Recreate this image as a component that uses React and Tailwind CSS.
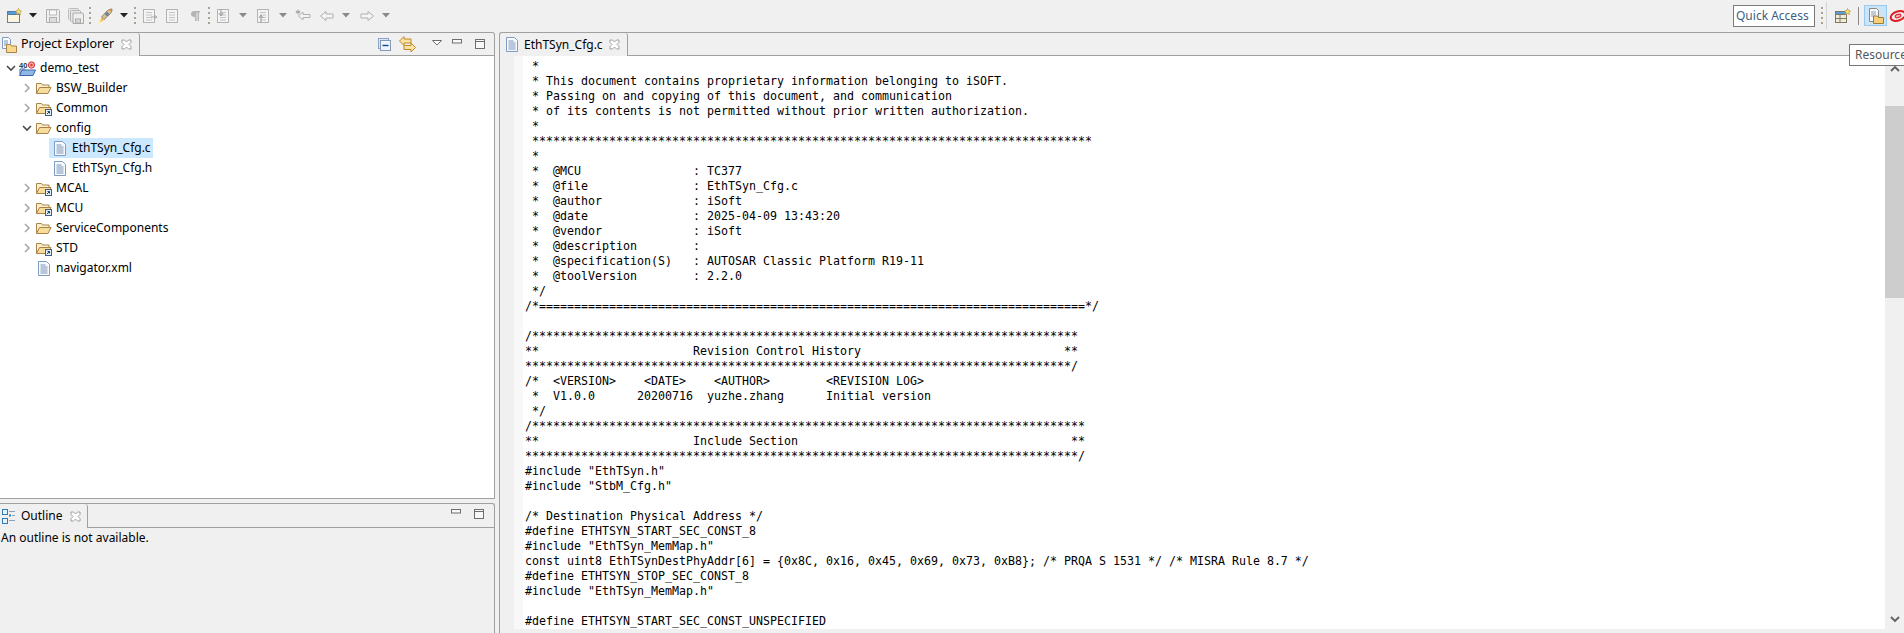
import React from "react";

const stars = (n) => "*".repeat(n);

const codeLines = [
  " *",
  " * This document contains proprietary information belonging to iSOFT.",
  " * Passing on and copying of this document, and communication",
  " * of its contents is not permitted without prior written authorization.",
  " *",
  " " + stars(80),
  " *",
  " *  @MCU                : TC377",
  " *  @file               : EthTSyn_Cfg.c",
  " *  @author             : iSoft",
  " *  @date               : 2025-04-09 13:43:20",
  " *  @vendor             : iSoft",
  " *  @description        :",
  " *  @specification(S)   : AUTOSAR Classic Platform R19-11",
  " *  @toolVersion        : 2.2.0",
  " */",
  "/*" + "=".repeat(78) + "*/",
  "",
  "/" + stars(78),
  "**                      Revision Control History                             **",
  stars(78) + "/",
  "/*  <VERSION>    <DATE>    <AUTHOR>        <REVISION LOG>",
  " *  V1.0.0      20200716  yuzhe.zhang      Initial version",
  " */",
  "/" + stars(79),
  "**                      Include Section                                       **",
  stars(79) + "/",
  '#include "EthTSyn.h"',
  '#include "StbM_Cfg.h"',
  "",
  "/* Destination Physical Address */",
  "#define ETHTSYN_START_SEC_CONST_8",
  '#include "EthTSyn_MemMap.h"',
  "const uint8 EthTSynDestPhyAddr[6] = {0x8C, 0x16, 0x45, 0x69, 0x73, 0xB8}; /* PRQA S 1531 */ /* MISRA Rule 8.7 */",
  "#define ETHTSYN_STOP_SEC_CONST_8",
  '#include "EthTSyn_MemMap.h"',
  "",
  "#define ETHTSYN_START_SEC_CONST_UNSPECIFIED",
];

// --- icons ---
function Svg({ className = "", w = 16, h = 16, children }) {
  return (
    <svg viewBox={`0 0 ${w} ${h}`} width={w} height={h} className={`shrink-0 ${className}`}>
      {children}
    </svg>
  );
}

const DropArrow = ({ className = "", color = "#222" }) => (
  <Svg w={8} h={5} className={className}><path d="M0 0h8L4 4.5z" fill={color} /></Svg>
);

const Grip = ({ className = "" }) => (
  <div className={`flex flex-col gap-[3px] w-[2px] shrink-0 ${className}`}>
    {[0, 1, 2, 3].map((i) => <div key={i} className="w-[2px] h-[2px] bg-[#a8a294]" />)}
  </div>
);

const NewIcon = ({ className }) => (
  <Svg className={className}>
    <rect x="1.5" y="3.5" width="12" height="11" fill="#fbf6dd" stroke="#6f7f8f" />
    <rect x="1.5" y="3.5" width="12" height="3" fill="#5b9bd5" stroke="#4a7fb0" />
    <path d="M12.5 0.5l1 2 2 .5-1.5 1.5.5 2-2-1-2 1 .5-2L9.5 3l2-.5z" fill="#f7e27a" stroke="#b8923a" strokeWidth=".7" />
  </Svg>
);

const SaveIcon = ({ className }) => (
  <Svg className={className}>
    <path d="M1.5 1.5h12l1 1v12h-13z" fill="#eeeeee" stroke="#b0b0b0" />
    <rect x="4.5" y="2" width="7" height="5" fill="#f8f8f8" stroke="#bcbcbc" />
    <rect x="4.5" y="9.5" width="7" height="5" fill="#dcdcdc" stroke="#b0b0b0" />
  </Svg>
);

const SaveAllIcon = ({ className }) => (
  <Svg className={className}>
    <rect x=".5" y=".5" width="10" height="11" rx="1" fill="#e8e8e8" stroke="#bcbcbc" />
    <rect x="2.5" y="2.5" width="10" height="11" rx="1" fill="#e8e8e8" stroke="#b4b4b4" />
    <path d="M5 5h9.5l1 1v9.5H5z" fill="#eeeeee" stroke="#aaaaaa" />
    <rect x="7.5" y="11" width="5" height="4" fill="#d8d8d8" stroke="#aaaaaa" />
  </Svg>
);

const RocketIcon = ({ className }) => (
  <Svg className={className}>
    <path d="M5.5 9.5L0.5 15.5c3 0 5-1 7-3.500z" fill="#fbeeb0" />
    <path d="M5 9.5l-2.500 4c2 0 3.500-.5 4.500-2z" fill="#f5bd52" />
    <path d="M4.500 9L10.500 2.500c1.500-1 3-1.500 4.500-1.500 0 2-.5 3.500-1.500 4.500L7 11.500z" fill="#d3c3a2" stroke="#8a6d3b" strokeWidth=".8" />
    <circle cx="10" cy="6" r="1.500" fill="#6f8fb0" stroke="#46586a" strokeWidth=".5" />
    <path d="M12 1.500L14.500 4 15 1z" fill="#d8862c" />
  </Svg>
);

const GreyDoc = ({ className, children }) => (
  <Svg className={className}>
    <rect x="1.5" y="1.5" width="11" height="13" fill="#f4f4f4" stroke="#b4b4b4" />
    <path d="M4 4.5h6M4 7h6M4 9.5h6M4 12h6" stroke="#c4c4c4" />
    {children}
  </Svg>
);

const Pilcrow = ({ className }) => (
  <Svg className={className}>
    <path d="M7 3h6v1.500h-1V13h-1.500V4.500H9.500V13H8V9C5.500 9 4 7.800 4 6s1.500-3 3-3z" fill="#b4b4b4" />
  </Svg>
);

const ArrowLeft = ({ className }) => (
  <Svg className={className}>
    <path d="M1.5 8L7 3.5V6h7v4H7v2.500z" fill="#f4f4f4" stroke="#b0b0b0" />
  </Svg>
);

const ArrowRight = ({ className }) => (
  <Svg className={className}>
    <path d="M14.5 8L9 3.5V6H2v4h7v2.500z" fill="#f4f4f4" stroke="#b0b0b0" />
  </Svg>
);

const LastEdit = ({ className }) => (
  <Svg className={className}>
    <path d="M3.5 8L8 4v2.500h7v3H8V12z" fill="#f4f4f4" stroke="#b0b0b0" />
    <path d="M3 1.500v5M.8 3l4.400 2M5.200 3L.8 5" stroke="#9a9a9a" strokeWidth=".9" />
  </Svg>
);

const FolderOpen = ({ link = false, className = "" }) => (
  <Svg className={className}>
    <path d="M.5 13.500V3.500h5l1 1.500H13v2" fill="#fbeecb" stroke="#a98449" />
    <path d="M.5 13.500L3.500 7.500H15l-3 6z" fill="#f8dc9c" stroke="#a98449" />
    {link && (
      <g>
        <rect x="9.5" y="9.5" width="6" height="6" fill="#e6eef8" stroke="#3d5f80" />
        <path d="M11 14l2.500-2.500M11.500 11.500h2v2" stroke="#1f4468" fill="none" />
      </g>
    )}
  </Svg>
);

const FileIcon = ({ className = "" }) => (
  <Svg w={12} h={15} className={className}>
    <path d="M.5.5h8l3 3v11H.5z" fill="#f7f9fd" stroke="#7f9cc4" />
    <path d="M2.500 4h5M2.500 6h7M2.500 8h7M2.500 10h7M2.500 12h7" stroke="#7b93b8" />
  </Svg>
);

const ExplorerIcon = ({ className = "" }) => (
  <Svg className={className}>
    <path d="M1.5.5h6l2 2v9h-8z" fill="#f7f9fd" stroke="#7f9cc4" />
    <path d="M3 4h4M3 6h4M3 8h3" stroke="#7b93b8" />
    <path d="M5.500 15.500V7.500h4l1 1.500h5v6.500z" fill="#f8d98e" stroke="#a98449" />
  </Svg>
);

const ProjectIcon = ({ className = "" }) => (
  <Svg w={17} h={15} className={className}>
    <text x="0" y="6.500" fontSize="7.500" fontWeight="700" fontFamily="Liberation Sans, sans-serif" fill="#333">40</text>
    <circle cx="12.5" cy="4" r="3.200" fill="#f3a8a8" stroke="#d93a3a" />
    <circle cx="12.5" cy="4" r="1.200" fill="#d93a3a" />
    <path d="M.5 14.500L3 9h13.500L14 14.500z" fill="#8fb7e6" stroke="#3a67a8" />
    <path d="M1 13V8h5" fill="none" stroke="#3a67a8" />
  </Svg>
);

const CloseX = ({ className = "" }) => (
  <Svg w={11} h={11} className={className}>
    <path d="M1 1h2.500L5.500 3l2-2H10v2.500l-2 2 2 2V10H7.500l-2-2-2 2H1V7.500l2-2-2-2z" fill="#fff" stroke="#8c8c8c" strokeWidth=".8" />
  </Svg>
);

const MinBtn = ({ className = "" }) => (
  <Svg w={10} h={5} className={className}><rect x=".5" y=".5" width="9" height="3.500" fill="#f8f8f8" stroke="#6e6e6e" /></Svg>
);

const MaxBtn = ({ className = "" }) => (
  <Svg w={10} h={10} className={className}>
    <rect x=".5" y=".5" width="9" height="9" fill="#f8f8f8" stroke="#6e6e6e" />
    <path d="M0 2.500h10" stroke="#6e6e6e" />
  </Svg>
);

const ViewMenu = ({ className = "" }) => (
  <Svg w={10} h={6} className={className}><path d="M.5.5h9L5 5z" fill="#fff" stroke="#6e6e6e" /></Svg>
);

const CollapseAll = ({ className = "" }) => (
  <Svg w={13} h={13} className={className}>
    <rect x=".5" y=".5" width="10" height="10" fill="#dbe6f4" stroke="#8ba6c9" />
    <rect x="2.500" y="2.500" width="10" height="10" fill="#eef4fb" stroke="#8498b8" />
    <path d="M4.500 7.500h6" stroke="#14488a" strokeWidth="1.400" />
  </Svg>
);

const LinkEditor = ({ className = "" }) => (
  <Svg w={17} h={17} className={className}>
    <path d="M.5 5L5 .5v2.500h7v4H5v2.500z" fill="#f9e3a8" stroke="#c08a24" />
    <path d="M16.500 11.500L12 7v2.500H5v4h7V16z" fill="#f9e3a8" stroke="#c08a24" />
  </Svg>
);

const OutlineIcon = ({ className = "" }) => (
  <Svg w={14} h={15} className={className}>
    <rect x=".5" y=".5" width="5" height="5" fill="#eaf3fb" stroke="#2c7cc0" />
    <rect x=".5" y="9.5" width="5" height="5" fill="#eaf3fb" stroke="#2c7cc0" />
    <rect x="7" y="5.5" width="2" height="2" fill="#2c7cc0" />
    <path d="M7 2.500h6M10 6.500h3M7 11.500h6" stroke="#8aa2b8" />
  </Svg>
);

const PerspectiveIcon = ({ className = "" }) => (
  <Svg className={className}>
    <rect x=".5" y="3.500" width="11" height="11" fill="#f1ecd8" stroke="#7e7a63" />
    <path d="M.5 6.500h11M5 6.500v8M.5 10.500h11" stroke="#7e7a63" />
    <rect x="1" y="4" width="10" height="2" fill="#5b9bd5" />
    <path d="M12.500 .5l1 2 2 .5-1.500 1.500.5 2-2-1-2 1 .5-2L9.500 3l2-.5z" fill="#f7e27a" stroke="#b8923a" strokeWidth=".7" />
  </Svg>
);

const ResourceIcon = ({ className = "" }) => (
  <Svg className={className}>
    <path d="M1.5.5h7l2 2v11h-9z" fill="#f5f7fa" stroke="#8a8a7a" />
    <path d="M3 4h5M3 6h5M3 8h4" stroke="#8da0b8" />
    <path d="M5.500 15.500V8h4l1 1.500h5v6z" fill="#f8d07a" stroke="#a07d35" />
  </Svg>
);

const DebugIcon = ({ className = "" }) => (
  <Svg w={18} h={14} className={className}>
    <ellipse cx="9" cy="7" rx="7.500" ry="4.500" transform="rotate(-18 9 7)" fill="none" stroke="#e01b24" strokeWidth="2" />
    <ellipse cx="9" cy="7" rx="3" ry="1.600" transform="rotate(-18 9 7)" fill="#f6b0b0" stroke="#e01b24" />
  </Svg>
);

const Chevron = ({ open }) => (
  <Svg w={10} h={10}>
    {open
      ? <path d="M1 3l4 4 4-4" fill="none" stroke="#4a4a4a" strokeWidth="1.600" />
      : <path d="M3 1l4 4-4 4" fill="none" stroke="#a8a8a8" strokeWidth="1.600" />}
  </Svg>
);

// --- tree rows ---
function FolderRow({ name, link = false, open = false }) {
  return (
    <div className="flex items-center h-5 pl-[22px]">
      <Chevron open={open} />
      <FolderOpen link={link} className="ml-[4px]" />
      <span className="ml-[4px]">{name}</span>
    </div>
  );
}

function FileRow({ name, selected = false }) {
  return (
    <div className="flex items-center h-5 pl-[49px]">
      <div className={`flex items-center h-5 pl-[5px] pr-[2px] ${selected ? "bg-[#cce8ff]" : ""}`}>
        <FileIcon />
        <span className="ml-[6px]">{name}</span>
      </div>
    </div>
  );
}

export default function App() {
  return (
    <div className="relative w-[1904px] h-[633px] overflow-hidden bg-[#f0f0f0] text-[12px] text-black font-['Noto_Sans',sans-serif]">
      {/* Toolbar */}
      <div className="flex items-center h-8 pb-[1px]">
        <NewIcon className="ml-[6px]" />
        <DropArrow className="ml-[7px]" />
        <SaveIcon className="ml-[8px]" />
        <SaveAllIcon className="ml-[7px]" />
        <Grip className="ml-[5px]" />
        <RocketIcon className="ml-[6px]" />
        <DropArrow className="ml-[7px]" />
        <Grip className="ml-[6px]" />
        <GreyDoc className="ml-[6px]">
          <path d="M9 9h5M12 7l3 2-3 2" fill="none" stroke="#a8a8a8" />
        </GreyDoc>
        <GreyDoc className="ml-[7px]" />
        <Pilcrow className="ml-[6px]" />
        <Grip className="ml-[5px]" />
        <GreyDoc className="ml-[6px]">
          <path d="M5 1v6M3 5l2 3 2-3" fill="none" stroke="#9a9a9a" />
        </GreyDoc>
        <DropArrow className="ml-[7px]" color="#8a8a8a" />
        <GreyDoc className="ml-[9px]">
          <path d="M5 15V8M3 10l2-3 2 3" fill="none" stroke="#9a9a9a" />
        </GreyDoc>
        <DropArrow className="ml-[7px]" color="#8a8a8a" />
        <LastEdit className="ml-[8px]" />
        <ArrowLeft className="ml-[8px]" />
        <DropArrow className="ml-[7px]" color="#8a8a8a" />
        <ArrowRight className="ml-[9px]" />
        <DropArrow className="ml-[7px]" color="#8a8a8a" />

        <div className="ml-auto flex items-center">
          <div className="flex items-center w-[82px] h-[22px] pl-[2px] border border-[#7a7a7a] bg-white text-[#3f5f7f]">Quick Access</div>
          <Grip className="ml-[6px]" />
          <div className="w-px h-[27px] ml-[3px] bg-[#d4d4d4]" />
          <PerspectiveIcon className="ml-[8px]" />
          <div className="w-px h-[18px] ml-[7px] bg-[#8a8a8a]" />
          <div className="flex items-center justify-center w-[23px] h-[21px] ml-[5px] bg-[#cce4f7] border border-[#99c9ef]">
            <ResourceIcon />
          </div>
          <DebugIcon className="ml-[2px] mr-[-3px]" />
        </div>
      </div>

      {/* Workspace */}
      <div className="flex h-[601px]">
        {/* Left column */}
        <div className="flex flex-col w-[495px] shrink-0">
          <section className="flex flex-col h-[467px] border-t border-r border-b border-[#a0a0a0] rounded-tr-[3px]">
            <div className="flex h-[23px] shrink-0">
              <div className="flex items-center w-[140px] border-r border-[#a0a0a0] rounded-tr-[3px]">
                <ExplorerIcon className="ml-[1px]" />
                <span className="ml-[4px] text-[12.5px]">Project Explorer</span>
                <CloseX className="ml-auto mr-[7px]" />
              </div>
              <div className="flex flex-1 items-start pt-[4px] border-b border-[#a0a0a0]">
                <CollapseAll className="ml-[238px] mt-[1px]" />
                <LinkEditor className="ml-[8px] mt-[-1px]" />
                <ViewMenu className="ml-[16px] mt-[3px]" />
                <MinBtn className="ml-[10px] mt-[2px]" />
                <MaxBtn className="ml-[13px] mt-[2px]" />
              </div>
            </div>
            <div className="flex-1 bg-white pt-[2px]">
              <div className="flex items-center h-5 pl-[6px]">
                <Chevron open />
                <ProjectIcon className="ml-[3px]" />
                <span className="ml-[4px]">demo_test</span>
              </div>
              <FolderRow name="BSW_Builder" />
              <FolderRow name="Common" link />
              <FolderRow name="config" open />
              <FileRow name="EthTSyn_Cfg.c" selected />
              <FileRow name="EthTSyn_Cfg.h" />
              <FolderRow name="MCAL" link />
              <FolderRow name="MCU" link />
              <FolderRow name="ServiceComponents" />
              <FolderRow name="STD" link />
              <div className="flex items-center h-5 pl-[38px]">
                <FileIcon />
                <span className="ml-[6px]">navigator.xml</span>
              </div>
            </div>
          </section>

          <section className="flex flex-col flex-1 mt-[4px] border-t border-r border-[#a0a0a0] rounded-tr-[3px]">
            <div className="flex h-[24px] shrink-0">
              <div className="flex items-center w-[88px] border-r border-[#a0a0a0] rounded-tr-[3px]">
                <OutlineIcon className="ml-[2px]" />
                <span className="ml-[5px]">Outline</span>
                <CloseX className="ml-auto mr-[6px]" />
              </div>
              <div className="flex flex-1 items-start pt-[5px] border-b border-[#a0a0a0]">
                <MinBtn className="ml-[363px]" />
                <MaxBtn className="ml-[13px]" />
              </div>
            </div>
            <div className="flex-1 pl-[1px] pt-[1px]">An outline is not available.</div>
          </section>
        </div>

        {/* Editor */}
        <section className="flex flex-col flex-1 ml-[4px] border-t border-l border-[#a0a0a0] rounded-tl-[3px]">
          <div className="flex h-[23px] shrink-0">
            <div className="flex items-center w-[128px] border-r border-[#a0a0a0] rounded-tr-[3px]">
              <FileIcon className="ml-[6px]" />
              <span className="ml-[6px]">EthTSyn_Cfg.c</span>
              <CloseX className="ml-auto mr-[7px]" />
            </div>
            <div className="flex-1 border-b border-[#a0a0a0]" />
          </div>
          <div className="flex h-[573px] shrink-0">
            <div className="w-[13px] ml-[1px] bg-[#f0f0f0]" />
            <div className="w-[9px] bg-[#f8f8f8]" />
            <pre className="flex-1 overflow-hidden bg-white pl-[2px] pt-[3px] text-[11.63px] leading-[15px] text-black font-['DejaVu_Sans_Mono',monospace]">
              {codeLines.join("\n")}
            </pre>
            <div className="flex flex-col items-center w-[19px] shrink-0">
              <Svg w={10} h={7} className="mt-[9px]"><path d="M1 6l4-4 4 4" fill="none" stroke="#5f5f5f" strokeWidth="1.800" /></Svg>
              <div className="w-full h-[192px] mt-[34px] bg-[#cdcdcd]" />
              <Svg w={10} h={7} className="mt-auto mb-[6px]"><path d="M1 1l4 4 4-4" fill="none" stroke="#5f5f5f" strokeWidth="1.800" /></Svg>
            </div>
          </div>
        </section>
      </div>

      {/* Tooltip over the toolbar */}
      <div className="absolute left-[1849px] top-[44px] flex items-center w-[80px] h-[22px] pl-[5px] bg-white border border-[#767676] text-[#575757]">Resource</div>
    </div>
  );
}
